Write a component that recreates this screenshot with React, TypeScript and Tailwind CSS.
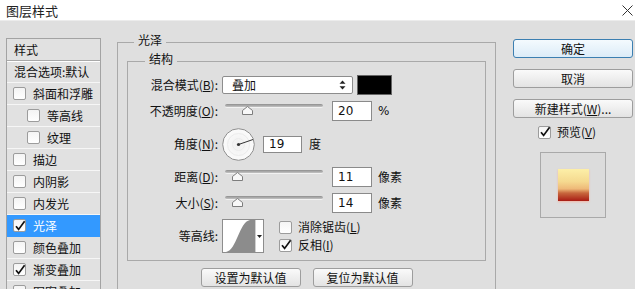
import React from 'react'

type Item = { label: string; indent?: boolean; checked?: boolean; active?: boolean }

const items: Item[] = [
  { label: '斜面和浮雕' },
  { label: '等高线', indent: true },
  { label: '纹理', indent: true },
  { label: '描边' },
  { label: '内阴影' },
  { label: '内发光' },
  { label: '光泽', checked: true, active: true },
  { label: '颜色叠加' },
  { label: '渐变叠加', checked: true },
  { label: '图案叠加' },
  { label: '外发光' },
  { label: '投影' },
]

function Check({ checked }: { checked?: boolean }) {
  return (
    <div className="w-[13px] h-[13px] shrink-0 border border-[#9c9c9c] rounded-[2px] bg-[linear-gradient(to_bottom,#f4f4f4,#ffffff)] flex items-center justify-center">
      {checked && (
        <svg width="12" height="12" viewBox="0 0 12 12" className="overflow-visible">
          <path d="M2 6.2 L4.6 9.4 L10.6 1.2" fill="none" stroke="#111" strokeWidth="1.7" />
        </svg>
      )}
    </div>
  )
}

function Slider({ pos }: { pos: number }) {
  return (
    <div className="w-[100px] flex flex-col pl-[3px] -mt-[3px]">
      <div className="w-[98px] h-[4px] rounded-[2px] bg-[linear-gradient(to_bottom,#8e8e8e,#c4c4c4)] border-b border-[#f2f2f2]" />
      <svg width="11" height="9" viewBox="0 0 11 9" className="-mt-[2px]" style={{ marginLeft: pos }}>
        <path d="M5.5 0.5 L10.5 4.5 L10.5 8.5 L0.5 8.5 L0.5 4.5 Z" fill="#f8f8f8" stroke="#7d7d7d" />
      </svg>
    </div>
  )
}

function NumBox({ value, w = 40, h = 20 }: { value: string; w?: number; h?: number }) {
  return (
    <div
      className="bg-white border border-[#8a8a8a] flex items-center pl-[5px] font-['DejaVu_Sans',sans-serif] text-[12px] text-[#111]"
      style={{ width: w, height: h }}
    >
      {value}
    </div>
  )
}

function Btn({ children, primary }: { children: React.ReactNode; primary?: boolean }) {
  return (
    <div
      className={
        primary
          ? 'h-[19px] flex items-center justify-center rounded-[3px] border border-[#3c7fb1] bg-[linear-gradient(to_bottom,#f4fafe,#dcecf8)] text-[12px] text-[#111]'
          : 'h-[19px] flex items-center justify-center rounded-[3px] border border-[#9d9d9d] bg-[linear-gradient(to_bottom,#fafafa,#e3e3e3)] text-[12px] text-[#111]'
      }
    >
      {children}
    </div>
  )
}

export default function App() {
  return (
    <div className="w-[635px] h-[289px] overflow-hidden bg-[#dfdfdf] flex flex-col font-['Noto_Sans_CJK_SC',sans-serif] text-[12px] text-[#111] leading-none">
      {/* title bar */}
      <div className="h-[21px] shrink-0 bg-white border-b border-[#ececec] flex items-center justify-between pl-[6px] pr-[2px]">
        <span className="text-[13px] text-[#222]">图层样式</span>
        <svg width="11" height="11" viewBox="0 0 11 11">
          <path d="M0.5 0.5 L10.5 10.5 M10.5 0.5 L0.5 10.5" stroke="#333" strokeWidth="1" />
        </svg>
      </div>

      <div className="flex items-start pt-[13px]">
        {/* style list */}
        <div className="ml-[6px] mt-[4px] w-[95px] h-[260px] shrink-0 border border-[#a3a3a3] bg-[#e1e1e1] flex flex-col">
          <div className="h-[22px] shrink-0 flex items-center pl-[7px] border-b border-[#a8a8a8]">样式</div>
          <div className="h-[22px] shrink-0 flex items-center pl-[7px] border-t border-white border-b border-b-[#f6f6f6]">混合选项:默认</div>
          {items.map((it) => (
            <div
              key={it.label}
              className={
                it.active
                  ? 'h-[22px] shrink-0 flex items-center gap-[7px] bg-[#3399ff] text-white border-b border-[#3399ff]'
                  : 'h-[22px] shrink-0 flex items-center gap-[7px] border-b border-[#f6f6f6]'
              }
              style={{ paddingLeft: it.indent ? 20 : 6 }}
            >
              <Check checked={it.checked} />
              <span>{it.label}</span>
            </div>
          ))}
        </div>

        {/* main */}
        <fieldset className="ml-[16px] w-[379px] shrink-0 border border-[#a9a9a9] px-[9px] pb-[30px] min-w-0">
          <legend className="ml-[7px] px-[4px] leading-[12px] pb-[4px]">光泽</legend>
          <fieldset className="mt-[3px] border border-[#a9a9a9] pt-[6px] pb-[7px] min-w-0">
            <legend className="ml-[17px] px-[4px] leading-[12px] pb-[4px]">结构</legend>

            {/* blend mode */}
            <div className="h-[20px] flex items-center">
              <div className="w-[90px] text-right shrink-0">混合模式(<u>B</u>):</div>
              <div className="ml-[4px] w-[131px] h-[18px] bg-white border border-[#8d8d8d] rounded-[2px] flex items-center justify-between pl-[9px] pr-[6px]">
                <span>叠加</span>
                <svg width="7" height="10" viewBox="0 0 7 10">
                  <path d="M3.5 0.5 L6.5 3.8 L0.5 3.8 Z M3.5 9.5 L6.5 6.2 L0.5 6.2 Z" fill="#222" />
                </svg>
              </div>
              <div className="ml-[4px] w-[35px] h-[20px] bg-black border border-[#666]" />
            </div>

            {/* opacity */}
            <div className="mt-[6px] h-[20px] flex items-center">
              <div className="w-[90px] text-right shrink-0">不透明度(<u>O</u>):</div>
              <div className="ml-[4px] flex items-center">
                <Slider pos={17} />
                <div className="ml-[10px]">
                  <NumBox value="20" />
                </div>
                <span className="ml-[6px] font-['DejaVu_Sans',sans-serif]">%</span>
              </div>
            </div>

            {/* angle */}
            <div className="mt-[7px] h-[32px] flex items-center">
              <div className="w-[90px] text-right shrink-0">角度(<u>N</u>):</div>
              <svg width="33" height="33" viewBox="0 0 33 33" className="ml-[4px]">
                <defs>
                  <radialGradient id="dial" cx="50%" cy="50%" r="50%">
                    <stop offset="0%" stopColor="#f0f0f0" />
                    <stop offset="100%" stopColor="#fbfbfb" />
                  </radialGradient>
                </defs>
                <circle cx="16.5" cy="16.5" r="15.8" fill="url(#dial)" stroke="#8e8e8e" strokeWidth="1" />
                <circle cx="16.5" cy="16.5" r="11" fill="none" stroke="#ececec" strokeWidth="1" />
                <circle cx="16.5" cy="16.5" r="6" fill="none" stroke="#ececec" strokeWidth="1" />
                <line x1="16.5" y1="16.5" x2="31" y2="11.5" stroke="#333" strokeWidth="1" />
                <circle cx="16.5" cy="16.5" r="1.6" fill="#333" />
              </svg>
              <div className="ml-[8px]">
                <NumBox value="19" w={39} h={17} />
              </div>
              <span className="ml-[7px]">度</span>
            </div>

            {/* distance */}
            <div className="mt-[7px] h-[20px] flex items-center">
              <div className="w-[90px] text-right shrink-0">距离(<u>D</u>):</div>
              <div className="ml-[4px] flex items-center">
                <Slider pos={7} />
                <div className="ml-[10px]">
                  <NumBox value="11" />
                </div>
                <span className="ml-[6px]">像素</span>
              </div>
            </div>

            {/* size */}
            <div className="mt-[6px] h-[20px] flex items-center">
              <div className="w-[90px] text-right shrink-0">大小(<u>S</u>):</div>
              <div className="ml-[4px] flex items-center">
                <Slider pos={7} />
                <div className="ml-[10px]">
                  <NumBox value="14" />
                </div>
                <span className="ml-[6px]">像素</span>
              </div>
            </div>

            {/* contour */}
            <div className="mt-[6px] h-[34px] flex items-center">
              <div className="w-[90px] text-right shrink-0">等高线:</div>
              <div className="ml-[4px] w-[42px] h-[34px] bg-white border border-[#8d8d8d] flex">
                <svg width="32" height="32" viewBox="0 0 32 32">
                  <path d="M3 32 C 14 30, 16 2, 27 0 L32 0 L32 32 Z" fill="#8c8c8c" />
                </svg>
                <div className="flex-1 flex items-center justify-center border-l border-[#d0d0d0]">
                  <svg width="5" height="3" viewBox="0 0 5 3">
                    <path d="M0 0 L5 0 L2.5 3 Z" fill="#222" />
                  </svg>
                </div>
              </div>
              <div className="ml-[15px] flex flex-col gap-[5px]">
                <div className="h-[13px] flex items-center gap-[6px]">
                  <Check />
                  <span>消除锯齿(<u>L</u>)</span>
                </div>
                <div className="h-[13px] flex items-center gap-[6px]">
                  <Check checked />
                  <span>反相(<u>I</u>)</span>
                </div>
              </div>
            </div>
          </fieldset>

          <div className="mt-[7px] flex justify-center gap-[12px]">
            <div className="w-[100px]">
              <Btn>设置为默认值</Btn>
            </div>
            <div className="w-[100px]">
              <Btn>复位为默认值</Btn>
            </div>
          </div>
        </fieldset>

        {/* right column */}
        <div className="ml-[17px] mt-[5px] w-[120px] shrink-0 flex flex-col">
          <div className="flex flex-col gap-[11px]">
            <Btn primary>确定</Btn>
            <Btn>取消</Btn>
            <Btn>
              新建样式(<u>W</u>)...
            </Btn>
          </div>
          <div className="mt-[8px] pl-[25px] h-[12px] flex items-center gap-[6px]">
            <Check checked />
            <span>预览(<u>V</u>)</span>
          </div>
          <div className="mt-[14px] ml-[27px] w-[66px] h-[66px] border border-[#a9a9a9] bg-[#dcdcdc] flex items-center justify-center">
            <div className="w-[31px] h-[32px] bg-[linear-gradient(to_bottom,#fcefa8_0%,#f5d98f_40%,#eeb978_62%,#c8683e_75%,#a81c14_100%)] shadow-[0_1px_2px_#f2b8a8]" />
          </div>
        </div>
      </div>
    </div>
  )
}
